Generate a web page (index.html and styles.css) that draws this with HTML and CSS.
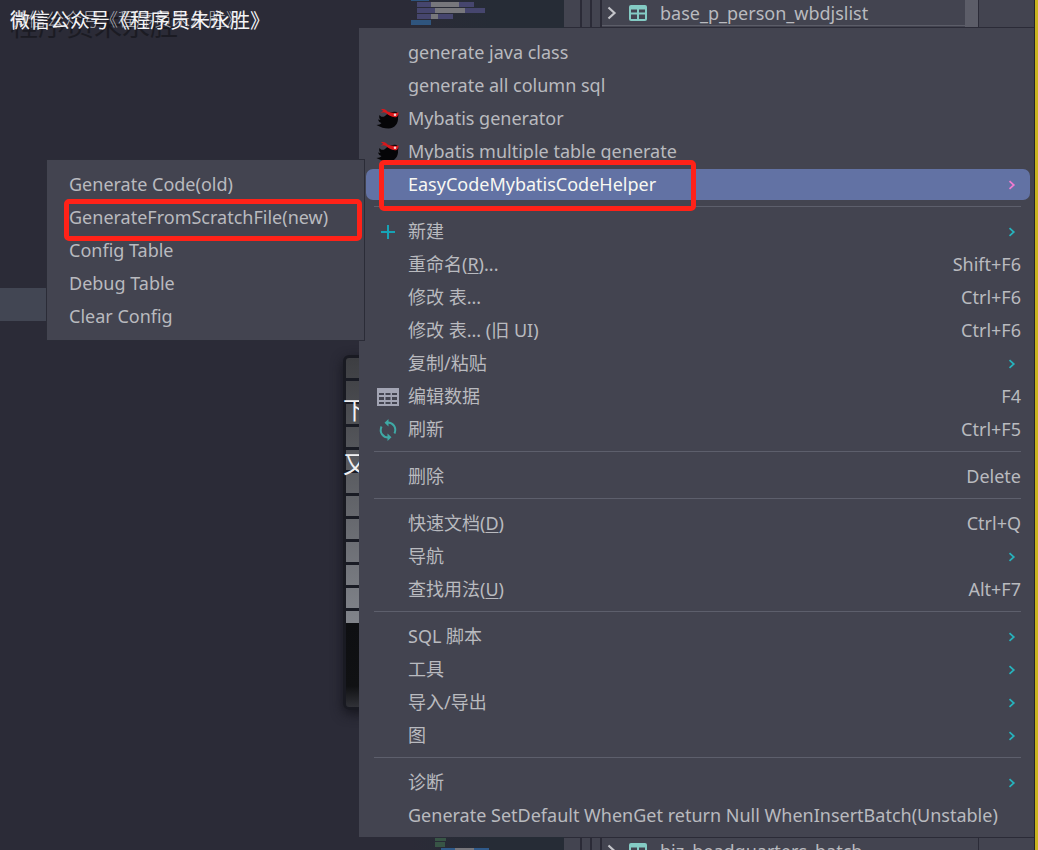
FILE: index.html
```
<!DOCTYPE html>
<html lang="zh-CN">
<head>
    <meta charset="UTF-8">
    <meta name="viewport" content="width=device-width, initial-scale=1.0">
    <title>EasyCodeMybatisCodeHelper</title>
    <link rel="stylesheet" href="styles.css">
</head>
<body>
    <!-- shared icons -->
    <svg class="icon-defs" width="0" height="0" aria-hidden="true">
        <symbol id="icon-arrow" viewBox="0 0 8 10">
            <path d="M1.5 1.2 5.8 5 1.5 8.8" fill="none" stroke="currentColor" stroke-width="1.7"/>
        </symbol>
        <symbol id="icon-bird" viewBox="0 0 24 22">
            <path d="M3.500 7C5 9 7 9.500 9 8C11 6 14 4 17 4C21 3 22.500 5 22.300 8L22 9.500C22.500 15 19 20.500 12.500 20.500C8 20.500 5 19.500 0.500 17C3 17 4.500 16 5.500 15C3.500 14.500 2.500 13 2 11.500L4.500 12C3 10 3 9 3.500 7Z" fill="#050507"/>
            <path d="M5 1.500C8 0.500 10 1.500 11.500 3.500C14 4.500 19 5.500 22.500 4.500C22.800 7 21.500 9.300 19 9.300C15.500 9 12 7 10 5C8.500 4 6.500 4 4.500 5L7.500 2.800Z" fill="#d8181c"/>
            <circle cx="19" cy="6.800" r="1.300" fill="#f1d9d9"/>
        </symbol>
        <symbol id="icon-table" viewBox="0 0 18 16">
            <rect width="18" height="16" rx="2" fill="#84cbc4"/>
            <path d="M2 4.500h6v3H2zM10 4.500h6v3h-6zM2 9.500h6V14H2zM10 9.500h6V14h-6z" fill="#434450"/>
        </symbol>
        <symbol id="icon-chevron" viewBox="0 0 10 14">
            <path d="M1.500 1.500 7.500 7 1.500 12.500" fill="none" stroke="#c4c5ca" stroke-width="2.200"/>
        </symbol>
    </svg>

    <div class="ide">
        <div class="project">
            <p class="mark mark-shadow" aria-hidden="true">程序员朱永胜</p>
            <p class="mark mark-thin" aria-hidden="true">微信公众号《程序员朱永胜》</p>
            <p class="mark mark-main">微信公众号《程序员朱永胜》</p>
            <div class="selected-row"></div>
            <div class="keyboard">
                <span>下</span>
                <span>又</span>
            </div>
        </div>

        <div class="minimap">
            <svg width="80" height="26" viewBox="0 0 80 26">
                <path d="M0 0h18v1H0zM0 20h20v5H0z" fill="#2f557e"/>
                <path d="M6 2h57v5H6zM6 8h68v5H6zM6 14h36v5H6z" fill="#46466e"/>
                <path d="M20 2h28v5H20zM24 8h30v5H24zM20 14h7v5h-7z" fill="#77777c"/>
            </svg>
            <svg width="80" height="12" viewBox="0 0 80 12">
                <path d="M24 0h11v3H24zM24 4h10v5H24z" fill="#385546"/>
                <path d="M30 10h48v2H30z" fill="#2f5a8a"/>
                <path d="M44 10h19v2H44z" fill="#77777c"/>
            </svg>
        </div>

        <div class="database">
            <div class="tree-row tree-top">
                <i></i><i></i><i></i>
                <div class="tree-name">
                    <svg class="chevron"><use href="#icon-chevron"/></svg>
                    <svg class="table-icon"><use href="#icon-table"/></svg>
                    <span>base_p_person_wbdjslist</span>
                </div>
                <div class="tree-scroll"></div>
                <div class="tree-end"></div>
            </div>
            <div class="tree-row tree-bottom">
                <i></i><i></i><i></i>
                <div class="tree-name">
                    <svg class="chevron"><use href="#icon-chevron"/></svg>
                    <svg class="table-icon"><use href="#icon-table"/></svg>
                    <span>biz_headquarters_batch</span>
                </div>
                <div class="tree-end"></div>
            </div>
        </div>
    </div>

    <ul class="menu main-menu">
        <li><button class="item">generate java class</button></li>
        <li><button class="item">generate all column sql</button></li>
        <li><button class="item"><svg class="icon"><use href="#icon-bird"/></svg>Mybatis generator</button></li>
        <li><button class="item"><svg class="icon"><use href="#icon-bird"/></svg>Mybatis multiple table generate</button></li>
        <li class="has-submenu">
            <button class="item active">EasyCodeMybatisCodeHelper<svg class="arrow"><use href="#icon-arrow"/></svg></button>
            <div class="callout callout-helper"></div>
            <ul class="menu submenu">
                <li><button class="item">Generate Code(old)</button></li>
                <li class="has-callout">
                    <button class="item">GenerateFromScratchFile(new)</button>
                    <div class="callout callout-scratch"></div>
                </li>
                <li><button class="item">Config Table</button></li>
                <li><button class="item">Debug Table</button></li>
                <li><button class="item">Clear Config</button></li>
            </ul>
        </li>
        <li class="separator"></li>
        <li><button class="item">
            <svg class="icon" viewBox="0 0 24 22"><path d="M12 4v14M5 11h14" stroke="#16a3b5" stroke-width="2"/></svg>
            新建<svg class="arrow"><use href="#icon-arrow"/></svg></button></li>
        <li><button class="item"><span>重命名(<u>R</u>)...</span><kbd>Shift+F6</kbd></button></li>
        <li><button class="item">修改 表...<kbd>Ctrl+F6</kbd></button></li>
        <li><button class="item">修改 表... (旧 UI)<kbd>Ctrl+F6</kbd></button></li>
        <li><button class="item">复制/粘贴<svg class="arrow"><use href="#icon-arrow"/></svg></button></li>
        <li><button class="item">
            <svg class="icon" viewBox="0 0 24 22">
                <rect x="1" y="2" width="22" height="18" fill="#a3a5b4"/>
                <path d="M3 7h5v2H3zM9.500 7h5v2h-5zM16 7h5v2h-5zM3 11h5v3H3zM9.500 11h5v3h-5zM16 11h5v3h-5zM3 16h5v2H3zM9.500 16h5v2h-5zM16 16h5v2h-5z" fill="#434450"/>
            </svg>
            编辑数据<kbd>F4</kbd></button></li>
        <li><button class="item">
            <svg class="icon" viewBox="0 0 24 22">
                <path d="M11 3.500C17 3 21 8.500 18.500 14.500M13 18.500C7 19 3 13.500 5.500 7.500" fill="none" stroke="#3fa9a5" stroke-width="2"/>
                <path d="M12.500 0v7.500L8.500 3.700zM11.500 22v-7.500l4 3.800z" fill="#3fa9a5"/>
            </svg>
            刷新<kbd>Ctrl+F5</kbd></button></li>
        <li class="separator"></li>
        <li><button class="item">删除<kbd>Delete</kbd></button></li>
        <li class="separator"></li>
        <li><button class="item"><span>快速文档(<u>D</u>)</span><kbd>Ctrl+Q</kbd></button></li>
        <li><button class="item">导航<svg class="arrow"><use href="#icon-arrow"/></svg></button></li>
        <li><button class="item"><span>查找用法(<u>U</u>)</span><kbd>Alt+F7</kbd></button></li>
        <li class="separator"></li>
        <li><button class="item">SQL 脚本<svg class="arrow"><use href="#icon-arrow"/></svg></button></li>
        <li><button class="item">工具<svg class="arrow"><use href="#icon-arrow"/></svg></button></li>
        <li><button class="item">导入/导出<svg class="arrow"><use href="#icon-arrow"/></svg></button></li>
        <li><button class="item">图<svg class="arrow"><use href="#icon-arrow"/></svg></button></li>
        <li class="separator"></li>
        <li><button class="item">诊断<svg class="arrow"><use href="#icon-arrow"/></svg></button></li>
        <li><button class="item">Generate SetDefault WhenGet return Null WhenInsertBatch(Unstable)</button></li>
    </ul>
</body>
</html>
```
FILE: styles.css
```
* { margin: 0; padding: 0; box-sizing: border-box; }

body {
    font-family: 'Noto Sans', 'Noto Sans CJK SC', sans-serif;
    font-size: 18px;
    color: #b9babf;
    background: #2b2b37;
    min-height: 100vh;
    overflow: hidden;
}

ul { list-style: none; }

.icon-defs { position: absolute; }

/* IDE behind the menus */
.ide {
    display: grid;
    grid-template-columns: 411px 153px 1fr;
    height: 100vh;
    border-right: 3px solid #c9b41f;
}

.project {
    position: relative;
}

.mark {
    position: absolute;
    left: 10px;
    white-space: nowrap;
    font-family: 'Noto Sans CJK SC', sans-serif;
}

.mark-shadow {
    top: 6px;
    font-size: 28px;
    line-height: 36px;
    color: #1b1b23;
}

.mark-thin {
    top: 4px;
    font-size: 18px;
    line-height: 28px;
    font-weight: 300;
    color: #b4b4bb;
}

.mark-main {
    top: 6px;
    font-size: 20px;
    line-height: 28px;
    color: #f4f4f6;
}

.selected-row {
    width: 100%;
    height: 33px;
    margin-top: 288px;
    background: #424653;
}

.keyboard {
    display: flex;
    flex-direction: column;
    gap: 20px;
    height: 355px;
    margin: 34px 0 0 343px;
    padding-top: 35px;
    border: 3px solid #191a22;
    border-radius: 6px;
    color: #f0f0f2;
    font-size: 24px;
    line-height: 34px;
    background:
        linear-gradient(#0e0f12, #101113 75%, #303137) 0 100% / 100% 84px no-repeat,
        repeating-linear-gradient(transparent 0 20px, #191b24 20px 23px),
        linear-gradient(#3d3e42, #85888f 280px);
    box-shadow: 0 4px 12px #16161e;
}

.keyboard span { margin-left: -3px; }

.minimap {
    display: flex;
    flex-direction: column;
    justify-content: space-between;
    background: linear-gradient(90deg, #2b2b37, #262c36 80px);
}

.minimap svg { display: block; }

/* database tree */
.database {
    display: flex;
    flex-direction: column;
    justify-content: space-between;
    background: #434450;
    border-right: 1px solid #23232c;
}

.tree-row {
    display: flex;
    overflow: hidden;
}

.tree-row i { border-right: 2px solid #2b2b37; width: 10px; }
.tree-row i:first-child { width: 18px; }

.tree-top {
    height: 28px;
    border-bottom: 1px solid #2b2b37;
}

.tree-bottom {
    height: 13px;
    border-top: 1px solid #2b2b37;
}

.tree-name {
    flex: 1;
    display: flex;
    align-items: center;
    height: 26px;
    padding-left: 5px;
    border-bottom: 1px solid #5c5d68;
    line-height: 26px;
}

.chevron { width: 10px; height: 14px; margin-right: 12px; }
.table-icon { width: 18px; height: 16px; margin-right: 13px; }
.tree-scroll { width: 13px; background: #5c5d68; }
.tree-end { width: 56px; border-left: 1px solid #2b2b37; }

/* context menus */
.menu {
    position: absolute;
    background: #434450;
}

.main-menu {
    top: 28px;
    left: 359px;
    right: 4px;
    padding: 8px 4px 5px 7px;
}

.submenu {
    top: -9px;
    right: 100%;
    width: 319px;
    margin-right: 1px;
    padding: 8px 7px 7px 8px;
    border: 1px solid #2b2c37;
}

.item {
    display: flex;
    align-items: center;
    width: 100%;
    height: 31px;
    padding: 0 9px 0 42px;
    border: none;
    border-radius: 7px;
    background: none;
    color: inherit;
    font: inherit;
    line-height: 31px;
    white-space: nowrap;
    text-align: left;
    cursor: pointer;
}

.menu li { padding: 1px 0; }

.submenu .item { padding: 0 14px; }

.item:hover, .item.active {
    background: #6272a4;
    color: #f8f8f2;
}

.icon {
    width: 24px;
    height: 22px;
    margin: 0 8px 0 -32px;
}

.arrow {
    width: 8px;
    height: 10px;
    margin: 0 5px 0 auto;
    color: #27b3bd;
}

.active .arrow { color: #f07bd0; }

.item u { text-underline-offset: 2px; text-decoration-thickness: 1px; }

kbd {
    margin-left: auto;
    font: inherit;
}

.menu .separator {
    height: 14px;
    margin: 0 9px 0 8px;
    padding-top: 5px;
}

.separator::before {
    content: '';
    display: block;
    border-top: 1px solid #5d5f6c;
}

/* red marker boxes */
.has-submenu, .has-callout { position: relative; }

.callout {
    position: absolute;
    border: 5px solid #ff2218;
    border-radius: 5px;
    pointer-events: none;
}

.callout-helper {
    top: -8px;
    left: 13px;
    width: 317px;
    height: 51px;
}

.callout-scratch {
    top: -2px;
    left: 9px;
    right: -5px;
    height: 42px;
}
```
